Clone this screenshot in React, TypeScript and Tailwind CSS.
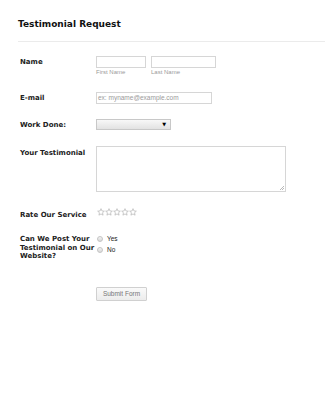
import React from "react";

const Star = () => (
  <svg width="8" height="8" viewBox="0 0 24 24">
    <path d="M12 2l2.9 6.9 7.1.6-5.4 4.7 1.6 7.3L12 17.8 5.8 21.5l1.6-7.3L2 9.5l7.1-.6z" fill="#fff" stroke="#b0b0b0" strokeWidth="2" strokeLinejoin="round" />
  </svg>
);

const Radio = () => (
  <span className="inline-block w-[6px] h-[6px] rounded-full border border-[#c4c4c4] bg-gradient-to-b from-[#f4f4f4] to-[#d8d8d8]" />
);

export default function App() {
  const font = { fontFamily: '"DejaVu Sans", Verdana, sans-serif' };
  const sans = { fontFamily: '"Liberation Sans", Arial, sans-serif' };
  return (
    <div className="w-[325px] h-[400px] bg-white text-[#222]" style={font}>
      <div className="pt-[18px] pl-[18px] text-[9px] leading-[12px] font-bold text-[#111]">Testimonial Request</div>
      <div className="mt-[11px] ml-[18px] h-px bg-[#ebebeb]" />

      <div className="pl-[20px]">
        <div className="mt-[14px] flex">
          <div className="w-[76px] text-[7px] leading-[13px] font-bold">Name</div>
          <div className="flex gap-[5px]">
            <div className="flex flex-col">
              <div className="w-[50px] h-[12px] border border-[#d6d6d6]" />
              <div className="mt-[1px] text-[6px] leading-[7px] text-[#9a9a9a]" style={sans}>First Name</div>
            </div>
            <div className="flex flex-col">
              <div className="w-[65px] h-[12px] border border-[#d6d6d6]" />
              <div className="mt-[1px] text-[6px] leading-[7px] text-[#9a9a9a]" style={sans}>Last Name</div>
            </div>
          </div>
        </div>

        <div className="mt-[16px] flex items-start">
          <div className="w-[76px] h-[12px] text-[7px] leading-[13px] font-bold">E-mail</div>
          <div className="w-[116px] h-[12px] border border-[#d6d6d6] pl-[1px] text-[6.5px] leading-[10px] text-[#9a9a9a]" style={sans}>ex: myname@example.com</div>
        </div>

        <div className="mt-[15px] flex items-start">
          <div className="w-[76px] h-[11px] text-[7px] leading-[12px] font-bold">Work Done:</div>
          <div className="w-[75px] h-[11px] border border-[#c8c8c8] bg-gradient-to-b from-[#f8f8f8] to-[#e2e2e2] flex items-center justify-end pr-[4px]">
            <span className="text-[5px] leading-[5px] text-black">▼</span>
          </div>
        </div>

        <div className="mt-[16px] flex">
          <div className="w-[76px] pt-[3px] text-[7px] leading-[9px] font-bold">Your Testimonial</div>
          <div className="relative w-[190px] h-[46px] border border-[#d6d6d6]">
            <svg className="absolute right-[1px] bottom-[1px]" width="5" height="5" viewBox="0 0 5 5">
              <path d="M5 1L1 5M5 3L3 5" stroke="#a8a8a8" strokeWidth="0.8" />
            </svg>
          </div>
        </div>

        <div className="mt-[16px] flex">
          <div className="w-[77px] pt-[3px] text-[7px] leading-[9px] font-bold">Rate Our Service</div>
          <div className="flex">
            <Star /><Star /><Star /><Star /><Star />
          </div>
        </div>

        <div className="mt-[15px] flex">
          <div className="w-[77px] text-[7px] leading-[8.5px] font-bold">Can We Post Your Testimonial on Our Website?</div>
          <div className="flex flex-col gap-[4px]">
            <div className="flex items-center gap-[4px] text-[6.5px] leading-[7px]" style={sans}><Radio /><span>Yes</span></div>
            <div className="flex items-center gap-[4px] text-[6.5px] leading-[7px]" style={sans}><Radio /><span>No</span></div>
          </div>
        </div>

        <div className="mt-[26px] ml-[76px] flex">
          <div className="flex items-center justify-center w-[51px] h-[14px] border border-[#d0d0d0] rounded-[1px] bg-gradient-to-b from-[#fafafa] to-[#ececec] text-[6.5px] text-[#777]" style={sans}>Submit Form</div>
        </div>
      </div>
    </div>
  );
}
